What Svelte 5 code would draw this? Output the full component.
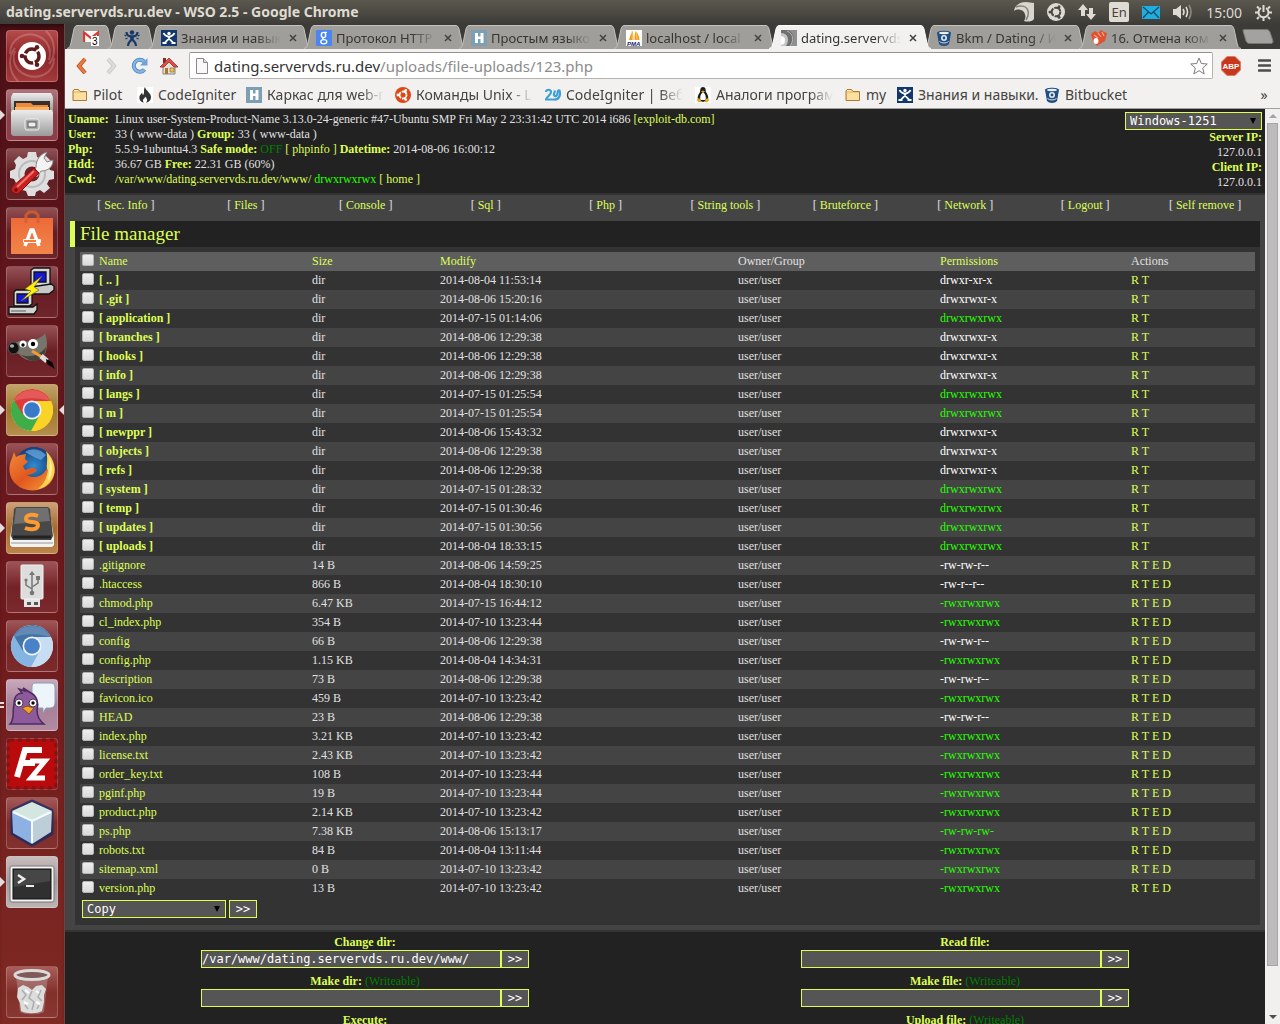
<script>
  const tabs = [
    { icon: 'gmail', pinned: true },
    { icon: 'runner', pinned: true },
    { icon: 'people', title: 'Знания и навык' },
    { icon: 'google', title: 'Протокол HTTP' },
    { icon: 'habr', title: 'Простым языко' },
    { icon: 'pma', title: 'localhost / local' },
    { icon: 'arc', title: 'dating.servervds' },
    { icon: 'bucket', title: 'Bkm / Dating / И' },
    { icon: 'red', title: '16. Отмена ком' }
  ].map((tab) => ({ ...tab, active: tab.icon === 'arc' }));

  const bookmarks = [
    { icon: 'folder', title: 'Pilot' },
    { icon: 'flame', title: 'CodeIgniter' },
    { icon: 'habr', title: 'Каркас для web-пр', fade: true },
    { icon: 'ubuntu', title: 'Команды Unix - Lin', fade: true },
    { icon: 'wave', title: 'CodeIgniter | Веб р', fade: true },
    { icon: 'tux', title: 'Аналоги программ', fade: true },
    { icon: 'folder', title: 'my' },
    { icon: 'people', title: 'Знания и навыки.' },
    { icon: 'bucket', title: 'Bitbucket' }
  ];

  const launcher = [
    { icon: 'dash', tone: 'red' },
    { icon: 'files', tone: 'rose', left: true },
    { icon: 'settings', tone: 'dark' },
    { icon: 'software', tone: 'dark' },
    { icon: 'putty', tone: 'dark' },
    { icon: 'gimp', tone: 'dark' },
    { icon: 'chrome', tone: 'gold', left: true, right: true },
    { icon: 'firefox', tone: 'dark' },
    { icon: 'sublime', tone: 'amber', left: true },
    { icon: 'usb', tone: 'dark' },
    { icon: 'chromium', tone: 'dark' },
    { icon: 'pidgin', tone: 'lilac', double: true },
    { icon: 'filezilla', tone: 'crimson' },
    { icon: 'netbeans', tone: 'dark' },
    { icon: 'terminal', tone: 'grey', left: true },
    { icon: 'trash', tone: 'dark', last: true }
  ];

  const menu = ['Sec. Info', 'Files', 'Console', 'Sql', 'Php', 'String tools', 'Bruteforce', 'Network', 'Logout', 'Self remove'];

  const rows = [
    ['[ .. ]', 'dir', '2014-08-04 11:53:14', 'drwxr-xr-x'],
    ['[ .git ]', 'dir', '2014-08-06 15:20:16', 'drwxrwxr-x'],
    ['[ application ]', 'dir', '2014-07-15 01:14:06', 'drwxrwxrwx'],
    ['[ branches ]', 'dir', '2014-08-06 12:29:38', 'drwxrwxr-x'],
    ['[ hooks ]', 'dir', '2014-08-06 12:29:38', 'drwxrwxr-x'],
    ['[ info ]', 'dir', '2014-08-06 12:29:38', 'drwxrwxr-x'],
    ['[ langs ]', 'dir', '2014-07-15 01:25:54', 'drwxrwxrwx'],
    ['[ m ]', 'dir', '2014-07-15 01:25:54', 'drwxrwxrwx'],
    ['[ newppr ]', 'dir', '2014-08-06 15:43:32', 'drwxrwxr-x'],
    ['[ objects ]', 'dir', '2014-08-06 12:29:38', 'drwxrwxr-x'],
    ['[ refs ]', 'dir', '2014-08-06 12:29:38', 'drwxrwxr-x'],
    ['[ system ]', 'dir', '2014-07-15 01:28:32', 'drwxrwxrwx'],
    ['[ temp ]', 'dir', '2014-07-15 01:30:46', 'drwxrwxrwx'],
    ['[ updates ]', 'dir', '2014-07-15 01:30:56', 'drwxrwxrwx'],
    ['[ uploads ]', 'dir', '2014-08-04 18:33:15', 'drwxrwxrwx'],
    ['.gitignore', '14 B', '2014-08-06 14:59:25', '-rw-rw-r--'],
    ['.htaccess', '866 B', '2014-08-04 18:30:10', '-rw-r--r--'],
    ['chmod.php', '6.47 KB', '2014-07-15 16:44:12', '-rwxrwxrwx'],
    ['cl_index.php', '354 B', '2014-07-10 13:23:44', '-rwxrwxrwx'],
    ['config', '66 B', '2014-08-06 12:29:38', '-rw-rw-r--'],
    ['config.php', '1.15 KB', '2014-08-04 14:34:31', '-rwxrwxrwx'],
    ['description', '73 B', '2014-08-06 12:29:38', '-rw-rw-r--'],
    ['favicon.ico', '459 B', '2014-07-10 13:23:42', '-rwxrwxrwx'],
    ['HEAD', '23 B', '2014-08-06 12:29:38', '-rw-rw-r--'],
    ['index.php', '3.21 KB', '2014-07-10 13:23:42', '-rwxrwxrwx'],
    ['license.txt', '2.43 KB', '2014-07-10 13:23:42', '-rwxrwxrwx'],
    ['order_key.txt', '108 B', '2014-07-10 13:23:44', '-rwxrwxrwx'],
    ['pginf.php', '19 B', '2014-07-10 13:23:44', '-rwxrwxrwx'],
    ['product.php', '2.14 KB', '2014-07-10 13:23:42', '-rwxrwxrwx'],
    ['ps.php', '7.38 KB', '2014-08-06 15:13:17', '-rw-rw-rw-'],
    ['robots.txt', '84 B', '2014-08-04 13:11:44', '-rwxrwxrwx'],
    ['sitemap.xml', '0 B', '2014-07-10 13:23:42', '-rwxrwxrwx'],
    ['version.php', '13 B', '2014-07-10 13:23:42', '-rwxrwxrwx']
  ].map(([name, size, modified, perms]) => ({
    name, size, modified, perms,
    dir: size === 'dir',
    writable: perms[8] === 'w',
    actions: size === 'dir' ? ['R', 'T'] : ['R', 'T', 'E', 'D']
  }));

  const tools = [
    { id: 'cd', label: 'Change dir:', value: '/var/www/dating.servervds.ru.dev/www/' },
    { id: 'read', label: 'Read file:', value: '' },
    { id: 'mkdir', label: 'Make dir:', note: '(Writeable)', value: '' },
    { id: 'mkfile', label: 'Make file:', note: '(Writeable)', value: '' },
    { id: 'exec', label: 'Execute:', value: '' },
    { id: 'upload', label: 'Upload file:', note: '(Writeable)', value: '' }
  ];
</script>

{#snippet smallIcon(name)}
  <svg class="small-icon" viewBox="0 0 16 16" aria-hidden="true">
    {#if name === 'gmail'}
      <rect x="0" y="1" width="16" height="11" rx="1" fill="#f6f6f6" />
      <path d="M1 12V2.500L8 8L15 2.500V12" fill="none" stroke="#d93a31" stroke-width="2.200" />
      <rect x="8" y="6" width="8" height="10" fill="#fff" />
      <text x="9" y="15" font-size="10" font-family="Liberation Sans, sans-serif" fill="#000">3</text>
    {:else if name === 'runner'}
      <circle cx="8" cy="2.500" r="2.200" fill="#15396d" />
      <path d="M2.500 2C2.500 6 5 6 8 6.500C11 6 13.500 6 13.500 2M6.500 7L9 10C10 12 12 12 12 16M9.500 7L7 10C6 12 4 12 4 16" fill="none" stroke="#15396d" stroke-width="2.200" />
      <path d="M.5 5l1.500 1M15.500 5l-1.500 1M1.500 9l2-1M14.500 9l-2-1" stroke="#15396d" stroke-width="1.200" />
    {:else if name === 'people'}
      <rect width="16" height="16" fill="#11376d" />
      <circle cx="8" cy="3.500" r="1.700" fill="#fff" />
      <path d="M2.500 3C4 6.500 6 6 8 6.500C10 6 12 6.500 13.500 3M7 6.500L9 9.500C10 11 12 11 12 14M9 6.500L7 9.500C6 11 4 11 4 14M1.500 13h4M10.500 13h4" fill="none" stroke="#fff" stroke-width="1.800" />
    {:else if name === 'google'}
      <rect width="16" height="16" rx="1" fill="#4a86ee" />
      <ellipse cx="7.500" cy="5" rx="2.200" ry="2.600" fill="none" stroke="#fff" stroke-width="1.400" />
      <path d="M8.500 2.300H11M8 7.600C6 8.300 6.500 9.300 8 9.800" fill="none" stroke="#fff" stroke-width="1.200" />
      <ellipse cx="7.800" cy="11.700" rx="3" ry="2.100" fill="none" stroke="#fff" stroke-width="1.300" />
    {:else if name === 'habr'}
      <rect width="16" height="16" fill="#7d9fb3" />
      <path d="M4 3h3v3.500h2.500V3h3v10h-3V9H7v4H4z" fill="#fff" />
    {:else if name === 'pma'}
      <rect width="16" height="16" fill="#fff" />
      <path d="M3 10C4 6 5 3 7 1L7.500 10ZM8.500 10C8.500 6 9 3 9.500 1C12 3 13.500 7 13.500 10Z" fill="#f49b1c" />
      <path d="M6 1l.5 9M10.500 2l.5 8" stroke="#ffc66b" />
      <text x="1" y="16" font-size="6" font-weight="700" font-style="italic" font-family="Liberation Sans, sans-serif" fill="#20206a">PMA</text>
    {:else if name === 'arc'}
      <rect width="16" height="16" fill="#8f8f8f" />
      <path d="M0 0H7C14 3 14 12 9 16H0Z" fill="#6f6f6f" />
      <path d="M0 3C7 3 9 10 5 16H0Z" fill="#c4c4c4" />
      <path d="M0 6C4 6 5 10 3 14L0 15Z" fill="#fff" />
      <path d="M6 1C13 4 13 11 9 16" fill="none" stroke="#b5b5b5" />
    {:else if name === 'bucket'}
      <path d="M1 3C1 0 15 0 15 3L13 14C11 16.500 5 16.500 3 14Z" fill="#205081" />
      <ellipse cx="8" cy="3" rx="5" ry="1.200" fill="#e6edf4" />
      <circle cx="8" cy="8" r="2.200" fill="none" stroke="#e6edf4" stroke-width="1.600" />
      <path d="M3.500 11.500C6 13.500 10 13.500 12.500 11.500" fill="none" stroke="#dbe5ef" />
    {:else if name === 'red'}
      <path d="M0 4L4 1L7 3L10 0L13 2L16 3L14 11L9 14L6 16L2 12Z" fill="#e2512f" />
      <path d="M3 5l4 3M7 3l3 4M11 2l2 4" stroke="#f4a58d" stroke-width="1.200" />
      <ellipse cx="5" cy="11" rx="2.500" ry="3" fill="#fff" />
    {:else if name === 'folder'}
      <path d="M1 13.500V4L2 2.500H6.500L8 4.500H14.500V13.500Z" fill="#f2c879" stroke="#a87c36" />
      <path d="M2 6H14V13H2Z" fill="#fbe0a2" />
      <path d="M2 3.500H6" stroke="#fff0c8" />
    {:else if name === 'flame'}
      <rect width="16" height="16" fill="#fff" />
      <path d="M8 0C9 4 14 6 14 10C14 14 11 15.500 9 15.500C11 14 10 11 8 9.500C8 12 6 11.500 6 13.500C6 14.500 6.500 15 7 15.500C3 15 2 12 2.500 9.500C3 7.500 4.500 7 5 5.500C5.500 7 5.500 8 6 8C8 6 6 3 8 0Z" fill="#333" />
    {:else if name === 'ubuntu'}
      <circle cx="8" cy="8" r="8" fill="#dd4814" />
      <circle cx="8" cy="8" r="3.500" fill="none" stroke="#fff" stroke-width="1.800" stroke-dasharray="6.400 1" />
      <circle cx="2.900" cy="8" r="1.400" fill="#fff" /><circle cx="10.700" cy="3.400" r="1.400" fill="#fff" /><circle cx="10.700" cy="12.600" r="1.400" fill="#fff" />
    {:else if name === 'wave'}
      <path d="M1 5C1 2 6 2 6 5C6 8 2 9 1 12.500H9C14 13 16 8 14.500 3.500C12 3 13 6 12 8C11 10 8.500 9 9 7L10 3.500" fill="none" stroke="#3ba0d8" stroke-width="2.200" />
    {:else if name === 'tux'}
      <rect width="16" height="16" fill="#fff" />
      <path d="M8 0C11 0 10.500 3 11 5C12 7 14 9 13 13L8 15L3 13C2 9 4 7 5 5C5.500 3 5 0 8 0Z" fill="#1d1d1d" />
      <path d="M8 5.500C10 6 11.500 10 10.500 13H5.500C4.500 10 6 6 8 5.500Z" fill="#fff" />
      <path d="M6 4.500L8 3.500L10 4.500L8 6Z M1.500 13L4 11L6.500 14.500L4 15.500ZM14.500 13L12 11L9.500 14.500L12 15.500Z" fill="#eda91b" />
    {/if}
  </svg>
{/snippet}

{#snippet chromeBall(red, green, yellow, blue)}
  <circle cx="26" cy="26" r="21" fill={yellow} />
  <path d="M26 26L7.800 15.500A21 21 0 0 0 26 47L35 31Z" fill={green} />
  <path d="M26 17H45A21 21 0 0 0 7.800 15.500L17 31Z" fill={red} />
  <path d="M26 26L18.200 30.500L26 47L34 30.500Z" fill={green} />
  <path d="M34 30.500L25 47A21 21 0 0 0 45 17H26Z" fill={yellow} />
  <circle cx="26" cy="26" r="9.500" fill="#f1f5fa" />
  <circle cx="26" cy="26" r="7.800" fill={blue} />
  <path d="M7 18A21 21 0 0 1 45 18C36 13 16 13 7 18Z" fill="#fff" opacity=".16" />
{/snippet}

{#snippet appIcon(name)}
  <svg viewBox="0 0 52 52" aria-hidden="true">
    {#if name === 'dash'}
      <path d="M4 24C4 8 20 1 32 6C42 10 46 20 43 30M48 28C48 44 32 50 20 45C10 41 5 31 9 21M12 51C2 42 2 26 9 18M40 1C50 10 50 26 43 34" fill="none" stroke="#fff" opacity=".2" stroke-width="2" />
      <circle cx="26" cy="26" r="14" fill="#fff" />
      <circle cx="26" cy="26" r="7" fill="none" stroke="#601b1b" stroke-width="3.500" stroke-dasharray="13 1.700" stroke-dashoffset="5" />
      <circle cx="16" cy="26" r="2.300" fill="#601b1b" /><circle cx="31" cy="17.300" r="2.300" fill="#601b1b" /><circle cx="31" cy="34.700" r="2.300" fill="#601b1b" />
    {:else if name === 'files'}
      <path d="M7 4H45L47 8V22H5V8Z" fill="url(#steel)" />
      <path d="M8 12H44V22H8Z" fill="#35302c" />
      <path d="M10 14H25L27 16H42V22H10Z" fill="#e98a3c" /><path d="M9 18H43V22H9Z" fill="#f8b26a" />
      <path d="M6 21H46L47 23V45L45 47H7L5 45V23Z" fill="url(#steel)" />
      <rect x="19" y="30" width="14" height="11" rx="2" fill="#aaa" stroke="#eee" /><rect x="22" y="33" width="8" height="5" fill="#eee" stroke="#555" />
    {:else if name === 'settings'}
      <path d="M22 4H30L31 9L36 11L40 8L45 13L42 18L44 22L48 23V31L43 32L41 36L44 40L38 45L34 42L30 44L29 48H22L20 43L16 42L12 45L7 39L10 35L8 31L4 30V23L9 21L10 17L8 13L13 8L17 11L21 9Z" fill="#dedede" />
      <circle cx="26" cy="26" r="13" fill="none" stroke="#bbb" stroke-width="2" /><circle cx="26" cy="26" r="7.500" fill="#6b2229" />
      <path d="M28 27L30 19C30 12 34 6 41 4L38 10L41 14L47 12C47 19 42 23 35 23L31 29Z" fill="#f3f3f3" stroke="#888" />
      <path d="M28 20L33 25L14 44C11 48 3 44 6 39Z" fill="#c92020" stroke="#8b0d10" /><path d="M28 23L11 39" stroke="#ee7771" stroke-width="2" /><circle cx="10" cy="42" r="1.700" fill="#6a0a0a" />
    {:else if name === 'software'}
      <path d="M20 14V8L23 5H29L32 8V14" fill="none" stroke="#c85a31" stroke-width="3" />
      <path d="M5 11H47V47H5Z" fill="url(#orange)" />
      <path d="M20 16V11M32 16V11" stroke="#d8622f" stroke-width="3" />
      <path d="M19 39L25 23H27L33 39" fill="none" stroke="#fff" stroke-width="3.500" /><rect x="17" y="32" width="18" height="4" rx="1" fill="#fff" /><path d="M18 34H30" stroke="#f47b3c" stroke-width="2" />
    {:else if name === 'putty'}
      <g stroke="#111" stroke-width="1.300">
        <path d="M25 4L28 2H44V19L41 21H25Z" fill="#d7d7d7" /><path d="M28 6H40V16H28Z" fill="#1416dd" />
        <path d="M25 21L45 18L48 20V24L43 28H26Z" fill="#c8c8c8" />
        <path d="M8 26L10 24H26V38L23 40H8Z" fill="#d7d7d7" /><path d="M11 28H22V37H11Z" fill="#1416dd" />
        <path d="M3 41H27L31 38V44L28 48H3Z" fill="#d2d2d2" /><path d="M5 45H20" stroke="#777" />
        <path d="M36 10L19 23L25 25L15 35L33 24L28 21Z" fill="#ffee12" stroke="#756b00" stroke-width=".7" />
      </g>
    {:else if name === 'gimp'}
      <path d="M9 18C13 14 19 18 25 16C31 14 37 12 39 8C42 16 42 27 36 33C29 38 18 36 13 29L6 27Z" fill="#77746b" />
      <path d="M13 29C20 33 33 32 40 22C39 34 31 38 23 35Z" fill="#444139" />
      <circle cx="17" cy="19" r="3.500" fill="#fff" /><circle cx="27" cy="19" r="5" fill="#fff" /><circle cx="17" cy="20" r="1.700" /><circle cx="27" cy="19" r="2.200" />
      <ellipse cx="7.500" cy="23" rx="5.500" ry="6" fill="#111" stroke="#555" /><ellipse cx="6" cy="21" rx="2.200" ry="1.700" fill="#aaa" />
      <path d="M26 26L36 32" stroke="#ef9d35" stroke-width="3" /><path d="M35 31L41 36" stroke="#ddd" stroke-width="5" /><path d="M40 34L46 37L49 44L41 39Z" fill="#080808" />
    {:else if name === 'chrome'}
      {@render chromeBall('#df3a3b', '#3fae49', '#fad327', '#3a79c8')}
    {:else if name === 'chromium'}
      {@render chromeBall('#4474a6', '#83b4e2', '#c6ddf3', '#4a82c8')}
    {:else if name === 'firefox'}
      <circle cx="28" cy="23" r="19" fill="url(#globe)" />
      <path d="M19 9C26 4 35 6 40 12L35 17L28 14Z" fill="#7ab9e9" opacity=".6" />
      <path d="M8 9L10 14L14 12L20 11L19 16L22 19L17 23L19 27L25 25C28 24 30 26 31 28C28 29 26 32 21 32C27 36 36 34 40 27C44 22 43 15 41 11C50 20 51 32 44 40C36 49 20 50 11 42C2 35 2 23 6 15Z" fill="url(#fox)" />
      <path d="M40 8C49 17 51 28 46 36C43 41 38 45 32 46C40 39 41 33 42 27C39 25 43 17 40 8Z" fill="#fbd451" />
      <path d="M43 14C47 22 47 31 42 38C43 31 45 22 43 14Z" fill="#fff3b0" />
    {:else if name === 'sublime'}
      <path d="M8 10H44L48 36V43L46 45H6L4 43V36Z" fill="#f3f3f3" /><path d="M5 40H47V42H5Z" fill="#c5c5c5" />
      <path d="M10 5H42L44 7L47 34L45 38H7L5 34L8 7Z" fill="#484848" /><path d="M10 6H42L44 19L8 22Z" fill="#707070" />
      <path d="M7 35H45" stroke="#222" stroke-width="3" />
      <path d="M32 14C27 12 20 12 20 17C20 22 32 18 32 23C32 28 24 28 19 26" fill="none" stroke="#ff9a2e" stroke-width="4" />
    {:else if name === 'usb'}
      <path d="M18 37H34V46H18Z" fill="#e4e4e4" /><path d="M21 41h4v3h-4zM28 41h4v3h-4z" fill="#555" />
      <rect x="15" y="4" width="22" height="34" rx="1" fill="#ddd" stroke="#f3f3f3" />
      <path d="M26 32V12M26 28L20 24V20M26 26L32 22V18" fill="none" stroke="#777" stroke-width="1.500" /><path d="M23 14L26 10L29 14Z" fill="#777" /><circle cx="26" cy="32" r="2.300" fill="#777" /><circle cx="20" cy="19" r="1.600" fill="#777" /><path d="M30 15h4v4h-4z" fill="#777" />
    {:else if name === 'pidgin'}
      <path d="M29 4H45C48 4 49 6 49 9V24C49 27 47 29 44 29H40L37 34V29H29C26 29 26 27 26 24V8C26 5 27 4 29 4Z" fill="#edf5fb" stroke="#8a9eb8" />
      <path d="M4 45C9 40 6 34 8 25C8 17 12 14 16 14L13 10L19 12L17 9L25 14C31 17 33 24 31 31C31 38 34 42 38 45Z" fill="#8d5a9c" stroke="#4d2b60" stroke-width="1.500" />
      <circle cx="13" cy="24" r="4" fill="#fff" stroke="#51305e" /><circle cx="27" cy="24" r="4" fill="#fff" stroke="#51305e" /><circle cx="13" cy="24" r="1.700" /><circle cx="27" cy="24" r="1.700" />
      <path d="M16 29L21 27L28 29L23 35Z" fill="#f0a22a" stroke="#884b13" />
    {:else if name === 'filezilla'}
      <rect x="2" y="2" width="48" height="48" rx="2" fill="#b90b0b" stroke="#7a1518" stroke-width="3" stroke-dasharray="4 4" />
      <path d="M11 39L19 12H36M16 25H29" fill="none" stroke="#fff" stroke-width="6" /><path d="M24 23H39L25 40H39" fill="none" stroke="#fff" stroke-width="5" />
    {:else if name === 'netbeans'}
      <path d="M26 5L45 14V36L26 47L7 36V14Z" fill="#263265" stroke="#1d2a62" stroke-width="5" stroke-linejoin="round" opacity=".8" />
      <path d="M26 5L46 14L26 24L6 14Z" fill="#d3e6e0" /><path d="M6 14L26 24V47L7 36Z" fill="#8eb1e4" /><path d="M46 14L26 24V47L45 35Z" fill="#bdced9" /><path d="M26 24V46M7 15L26 24L45 15" fill="none" stroke="#f5fbff" stroke-width="2" />
    {:else if name === 'terminal'}
      <rect x="4" y="10" width="44" height="36" rx="2" fill="#f3f3f3" stroke="#777" /><rect x="7" y="13" width="38" height="30" fill="#303030" stroke="#111" /><path d="M8 14H44V25L8 31Z" fill="#464646" />
      <path d="M12 19L18 23L12 27" fill="none" stroke="#eee" stroke-width="2.500" /><path d="M20 30H28" stroke="#eee" stroke-width="2" />
    {:else if name === 'trash'}
      <path d="M10 10H42L38 46C34 49 18 49 14 46Z" fill="#c9b9b9" opacity=".35" />
      <path d="M12 22L17 19L22 21L26 24L30 20L36 19L40 23L38 29L38 36L36 45C31 48 20 48 15 45L14 37L11 31Z" fill="#dcdcdc" />
      <path d="M16 24L20 29L16 34M26 25L23 32L28 36L26 44M35 24L32 31L36 35M19 39L22 43M33 39L31 43" fill="none" stroke="#adadad" stroke-width="1.500" /><path d="M19 24L23 27M18 36L22 38M30 25L33 27M30 36L34 38" stroke="#fff" stroke-width="2" />
      <ellipse cx="26" cy="9" rx="17" ry="4.500" fill="#7f5a58" stroke="#dadada" stroke-width="3" />
    {/if}
  </svg>
{/snippet}

<svg class="defs" width="0" height="0" aria-hidden="true">
  <defs>
    <linearGradient id="steel" x2="0" y2="1"><stop offset="0" stop-color="#ececec" /><stop offset="1" stop-color="#9b9b9b" /></linearGradient>
    <linearGradient id="orange" x2="0" y2="1"><stop offset="0" stop-color="#ed6a38" /><stop offset="1" stop-color="#f18549" /></linearGradient>
    <linearGradient id="fox" x2="1" y2="1"><stop offset="0" stop-color="#f08a3a" /><stop offset=".5" stop-color="#e2571e" /><stop offset="1" stop-color="#f3a03a" /></linearGradient>
    <radialGradient id="globe"><stop offset="0" stop-color="#2f8ed0" /><stop offset="1" stop-color="#173d7c" /></radialGradient>
  </defs>
</svg>

<div class="desktop">
  <header class="panel">
    <span class="window-title">dating.servervds.ru.dev - WSO 2.5 - Google Chrome</span>
    <div class="indicators">
      <svg width="20" height="20" viewBox="0 0 20 20"><path d="M0 9C1 3 6 0 12 0L20 1V17C18 20 13 20 10 19C12 16 12 12 9 9C6 7 2 7 0 9Z" fill="#d9d6cf" /><path d="M2 5C7 3 13 4 14 9C15 12 14 15 12 18" fill="none" stroke="#85827a" stroke-width="1.500" /></svg>
      <svg width="18" height="18" viewBox="0 0 18 18"><circle cx="9" cy="9" r="9" fill="#dfdbd2" /><circle cx="9" cy="9" r="4.300" fill="none" stroke="#4a4842" stroke-width="2" stroke-dasharray="8 1" /><circle cx="3" cy="9" r="1.500" fill="#4a4842" /><circle cx="12" cy="3.800" r="1.500" fill="#4a4842" /><circle cx="12" cy="14.200" r="1.500" fill="#4a4842" /></svg>
      <svg width="18" height="16" viewBox="0 0 18 16"><path d="M5 0L10 6H7V12H3V6H0ZM13 16L18 10H15V4H11V10H8Z" fill="#dfdbd2" /></svg>
      <span class="lang">En</span>
      <svg width="18" height="13" viewBox="0 0 18 13"><rect width="18" height="13" fill="#1eaee2" /><path d="M1 1L9 8L17 1M1 12L6.500 6M17 12L11.500 6" fill="none" stroke="#194a63" stroke-width="1.300" /></svg>
      <svg width="20" height="16" viewBox="0 0 20 16"><path d="M0 5H3L8 1V15L3 11H0Z" fill="#dfdbd2" /><path d="M10 5Q12 8 10 11M13 3Q16 8 13 13" fill="none" stroke="#dfdbd2" stroke-width="1.600" /><path d="M16 1Q20 8 16 15" fill="none" stroke="#8c8981" stroke-width="1.600" /></svg>
      <span class="clock">15:00</span>
      <svg width="17" height="17" viewBox="0 0 17 17"><path d="M6 4A5 5 0 1 0 11 4" fill="none" stroke="#dfdbd2" stroke-width="2" /><path d="M8.500 1V8M2 2.500L4 4.500M15 2.500L13 4.500M0 8.500H3M14 8.500H17M2 15L4 13M15 15L13 13M8.500 14V17" stroke="#dfdbd2" stroke-width="2" /></svg>
    </div>
  </header>

  <div class="workspace">
    <nav class="launcher" aria-label="Launcher">
      {#each launcher as app}
        <button class="app {app.tone}" class:last={app.last} aria-label={app.icon}>
          {@render appIcon(app.icon)}
          {#if app.left}<span class="pip left"></span>{/if}
          {#if app.right}<span class="pip right"></span>{/if}
          {#if app.double}<span class="pip double"></span>{/if}
        </button>
      {/each}
    </nav>

    <main class="window">
      <div class="tabs">
        {#each tabs as tab}
          <div class="tab" class:active={tab.active} class:pinned={tab.pinned}>
            <svg class="edge" viewBox="0 0 10 24"><path class="fill" d="M0 24C3 23 3 21 4 18L7 4C8 1 9 .5 10 .5V24Z" /><path class="line" d="M0 23.500C3 23 3 21 4 18L7 4C8 1 9 .5 10 .5" /></svg>
            <div class="tab-body">
              {@render smallIcon(tab.icon)}
              {#if !tab.pinned}
                <span class="tab-title">{tab.title}</span>
                <button class="close" aria-label="Close tab"><svg viewBox="0 0 8 8"><path d="M1 1L7 7M7 1L1 7" stroke="#44423f" stroke-width="1.500" /></svg></button>
              {/if}
            </div>
            <svg class="edge" viewBox="0 0 10 24"><path class="fill" d="M10 24C7 23 7 21 6 18L3 4C2 1 1 .5 0 .5V24Z" /><path class="line" d="M10 23.500C7 23 7 21 6 18L3 4C2 1 1 .5 0 .5" /></svg>
          </div>
        {/each}
        <button class="new-tab" aria-label="New tab"><svg width="32" height="15" viewBox="0 0 32 15"><path d="M2 .5H24C26 .5 27 1 28 3L31 12C31 14 30 14.500 29 14.500H8C6 14.500 5 14 4 12L1 2Q1 .5 2 .5Z" fill="#a3a2a0" stroke="#777672" /></svg></button>
      </div>

      <div class="toolbar">
        <button class="tool" aria-label="Back"><svg width="18" height="18" viewBox="0 0 18 18"><path d="M12 2L6 9L12 16" fill="none" stroke="#b34a18" stroke-width="4" /><path d="M12 2L6 9L12 16" fill="none" stroke="#ef7b3d" stroke-width="2.500" /></svg></button>
        <button class="tool" aria-label="Forward"><svg width="18" height="18" viewBox="0 0 18 18"><path d="M6 2L12 9L6 16" fill="none" stroke="#c7c4c0" stroke-width="4" /><path d="M6 2L12 9L6 16" fill="none" stroke="#dedbd8" stroke-width="2.500" /></svg></button>
        <button class="tool" aria-label="Reload"><svg width="18" height="18" viewBox="0 0 18 18"><path d="M13.500 12.500A6 6 0 1 1 13 4.500" fill="none" stroke="#4c82bb" stroke-width="4" /><path d="M13.500 12.500A6 6 0 1 1 13 4.500" fill="none" stroke="#83b5e2" stroke-width="2.500" /><path d="M16.500 1V8.500H9Z" fill="#6ba3d7" /></svg></button>
        <button class="tool" aria-label="Home"><svg width="18" height="18" viewBox="0 0 18 18"><path d="M3 9L9 3L15 9V17H3Z" fill="#e7e2d8" stroke="#87827a" /><path d="M3 1H6V6H3Z" fill="#8e2424" /><path d="M0 10L9 1L18 10H14L9 5L4 10Z" fill="#d9534c" stroke="#a02829" stroke-width=".8" /><path d="M5 11H8V17H5Z" fill="#ae7431" /><path d="M10 11H14V15H10Z" fill="#e9c44f" stroke="#8c7042" stroke-width=".7" /></svg></button>
        <div class="omnibox">
          <svg width="12" height="16" viewBox="0 0 12 16"><path d="M.5 .5H7.500L11.500 4.500V15.500H.5Z" fill="#f9f9f9" stroke="#8a8987" /><path d="M7.500 .5V4.500H11.500" fill="#ddd" stroke="#8a8987" /></svg>
          <span class="url"><span class="host">dating.servervds.ru.dev</span>/uploads/file-uploads/123.php</span>
          <button class="star" aria-label="Bookmark this page"><svg width="18" height="18" viewBox="0 0 18 18"><path d="M9 1L11.300 6.500L17.300 7L12.700 11L14.200 17L9 13.700L3.800 17L5.300 11L.7 7L6.700 6.500Z" fill="#fff" stroke="#7d7d7d" /></svg></button>
        </div>
        <button class="abp" aria-label="Adblock Plus"><svg width="20" height="20" viewBox="0 0 20 20"><path d="M6 .5H14L19.500 6V14L14 19.500H6L.5 14V6Z" fill="#c8371d" stroke="#dc7c69" /><text x="10" y="13" text-anchor="middle" font-size="8" font-weight="700" font-family="Liberation Sans, sans-serif" fill="#fff">ABP</text></svg></button>
        <button class="burger" aria-label="Menu"><svg width="13" height="13" viewBox="0 0 13 13"><path d="M1 1.500H12M1 6.500H12M1 11.500H12" stroke="#4d4c4a" stroke-width="2.600" stroke-linecap="round" /></svg></button>
      </div>

      <div class="bookmarks">
        {#each bookmarks as mark}
          <a href="#bookmark">{@render smallIcon(mark.icon)}<span class:fade={mark.fade}>{mark.title}</span></a>
        {/each}
        <button class="more" aria-label="More bookmarks">»</button>
      </div>

      <div class="viewport">
        <div class="page">
          <section class="info">
            <dl>
              <dt>Uname:</dt>
              <dd>Linux user-System-Product-Name 3.13.0-24-generic #47-Ubuntu SMP Fri May 2 23:31:42 UTC 2014 i686 <a href="#exploit">[exploit-db.com]</a></dd>
              <dt>User:</dt>
              <dd>33 ( www-data ) <b>Group:</b> 33 ( www-data )</dd>
              <dt>Php:</dt>
              <dd>5.5.9-1ubuntu4.3 <b>Safe mode:</b> <span class="dim">OFF</span> <a href="#phpinfo">[ phpinfo ]</a> <b>Datetime:</b> 2014-08-06 16:00:12</dd>
              <dt>Hdd:</dt>
              <dd>36.67 GB <b>Free:</b> 22.31 GB (60%)</dd>
              <dt>Cwd:</dt>
              <dd><a href="#root">/var/www/dating.servervds.ru.dev/www/</a> <span class="ok">drwxrwxrwx</span> <a href="#home">[ home ]</a></dd>
            </dl>
            <div class="side">
              <span class="select charset"><select aria-label="Charset"><option>Windows-1251</option><option>UTF-8</option></select></span>
              <b>Server IP:</b>
              <span>127.0.0.1</span>
              <b>Client IP:</b>
              <span>127.0.0.1</span>
            </div>
          </section>

          <nav class="menu" aria-label="Sections">
            {#each menu as item}
              <span>[ <a href="#section">{item}</a> ]</span>
            {/each}
          </nav>

          <section class="manager">
            <h1>File manager</h1>
            <div class="content">
              <table>
                <colgroup>
                  <col class="c-check" /><col class="c-name" /><col class="c-size" /><col class="c-modify" /><col class="c-owner" /><col class="c-perms" /><col class="c-actions" />
                </colgroup>
                <thead>
                  <tr>
                    <th><input type="checkbox" aria-label="Select all" /></th>
                    <th><a href="#sort">Name</a></th>
                    <th><a href="#sort">Size</a></th>
                    <th><a href="#sort">Modify</a></th>
                    <th>Owner/Group</th>
                    <th><a href="#sort">Permissions</a></th>
                    <th>Actions</th>
                  </tr>
                </thead>
                <tbody>
                  {#each rows as row}
                    <tr>
                      <td><input type="checkbox" aria-label={row.name} /></td>
                      <td><a href="#file" class:dir={row.dir}>{row.name}</a></td>
                      <td>{row.size}</td>
                      <td>{row.modified}</td>
                      <td>user/user</td>
                      <td><a href="#perms" class={row.writable ? 'ok' : 'plain'}>{row.perms}</a></td>
                      <td>{#each row.actions as action, i}{i ? ' ' : ''}<a href="#action">{action}</a>{/each}</td>
                    </tr>
                  {/each}
                </tbody>
              </table>
              <div class="bulk">
                <span class="select action"><select aria-label="Action"><option>Copy</option><option>Move</option><option>Delete</option></select></span>
                <button class="go">&gt;&gt;</button>
              </div>
            </div>
          </section>

          <section class="tools">
            {#each tools as tool}
              <form onsubmit={(e) => e.preventDefault()}>
                <div class="caption"><label for={tool.id}>{tool.label}</label>{#if tool.note}{' '}<span class="dim">{tool.note}</span>{/if}</div>
                <div class="field"><input id={tool.id} type="text" value={tool.value} /><button class="go">&gt;&gt;</button></div>
              </form>
            {/each}
          </section>
        </div>

        <div class="scrollbar" aria-hidden="true">
          <span class="arrow up"></span>
          <div class="track"><span class="thumb"></span></div>
          <span class="arrow down"></span>
        </div>
      </div>
    </main>
  </div>
</div>

<style>
  :global(body) { background: #222; }
  * { box-sizing: border-box; }
  button { border: 0; padding: 0; background: none; font: inherit; color: inherit; }
  svg { display: block; flex: none; }
  a { text-decoration: none; color: inherit; }
  .defs { position: absolute; }

  .desktop { display: flex; flex-direction: column; height: 100vh; overflow: hidden; font-family: "Noto Sans", "Open Sans", sans-serif; }

  .panel { flex: none; height: 24px; display: flex; align-items: center; justify-content: space-between; padding: 0 8px 0 6px; background: linear-gradient(#5b584e, #3d3c38); color: #dfdbd2; }
  .window-title { font-size: 14px; font-weight: 700; line-height: 20px; white-space: nowrap; }
  .indicators { display: flex; align-items: center; gap: 13px; }
  .lang { width: 20px; height: 20px; line-height: 20px; border-radius: 2px; background: #dfdbd2; color: #45433e; font-size: 13px; text-align: center; }
  .clock { font-size: 14px; }

  .workspace { flex: 1; min-height: 0; display: flex; }

  .launcher { flex: none; width: 65px; display: flex; flex-direction: column; gap: 7px; padding: 6px; background: linear-gradient(#4a1015, #5f151b 25%, #6c191d 55%, #7e2922); border-right: 1px solid #6d4444; box-shadow: inset 0 5px 5px -3px #2a090c; }
  .app { position: relative; flex: none; width: 52px; height: 52px; border-radius: 4px; border: 1px solid rgba(255, 255, 255, 0.2); background: linear-gradient(rgba(255, 200, 200, 0.34), rgba(255, 200, 200, 0.05) 50%, rgba(255, 200, 200, 0.09)); }
  .app svg { width: 52px; height: 52px; margin: -1px; }
  .last { margin-top: auto; }
  .red { background: linear-gradient(#b64a4a, #8c2327 50%, #a43a3a); }
  .rose { background: linear-gradient(#ad757b, #8a434b 50%, #8d3c47); }
  .gold { background: linear-gradient(#c3a36a, #a0792f 50%, #b68e4d); }
  .amber { background: linear-gradient(#cda077, #a66a2b 50%, #bd854a); }
  .lilac { background: linear-gradient(#c9a9bd, #a67f99 50%, #b18ba0); }
  .crimson { background: #8d191b; }
  .grey { background: linear-gradient(#c9bcbc, #a39a9a 50%, #bcb3b3); }
  .pip { position: absolute; top: 20px; border: 5px solid transparent; }
  .pip.left { left: -7px; border-left-color: #e4dcdc; border-right: 0; }
  .pip.right { right: -7px; border-right-color: #e4dcdc; border-left: 0; }
  .pip.double { left: -7px; top: 22px; width: 4px; height: 6px; border: solid #e4dcdc; border-width: 2px 0; }

  .window { flex: 1; min-width: 0; display: flex; flex-direction: column; background: #f2f1f0; }

  .tabs { flex: none; height: 25px; display: flex; align-items: flex-end; padding: 0 6px 0 2px; background: #3c3b37; }
  .tab { flex: 0 1 162px; min-width: 0; height: 24px; display: flex; margin-right: -7px; }
  .pinned { flex: 0 0 48px; }
  .edge { width: 10px; height: 24px; }
  .fill { fill: #9f9e9b; }
  .line { fill: none; stroke: #c4c3c0; }
  .tab-body { flex: 1; min-width: 0; display: flex; align-items: center; gap: 4px; padding: 0 0 0 2px; background: #9f9e9b; border-top: 1px solid #c4c3c0; color: #383530; }
  .pinned .tab-body { padding: 0 6px; }
  .active { position: relative; z-index: 1; }
  .active .fill { fill: #f2f1f0; }
  .active .tab-body { background: #f2f1f0; border-color: #fff; }
  .active .line { stroke: #fff; }
  .small-icon { width: 16px; height: 16px; }
  .tab-title { flex: 1; min-width: 0; overflow: hidden; white-space: nowrap; font-size: 13px; line-height: 20px; -webkit-mask-image: linear-gradient(90deg, #000 75%, transparent); mask-image: linear-gradient(90deg, #000 75%, transparent); }
  .close { width: 16px; height: 16px; display: grid; place-items: center; }
  .close svg { width: 8px; height: 8px; }
  .new-tab { align-self: center; margin-left: 8px; }

  .toolbar { flex: none; height: 33px; display: flex; align-items: center; padding: 0 9px 0 8px; }
  .tool { width: 29px; height: 26px; display: grid; place-items: center start; }
  .omnibox { flex: 1; min-width: 0; height: 27px; display: flex; align-items: center; gap: 6px; padding: 0 4px 0 6px; background: #fff; border: 1px solid #b5b3b0; border-top-color: #94928f; border-radius: 2px; }
  .url { flex: 1; min-width: 0; overflow: hidden; white-space: nowrap; font-size: 15px; line-height: 24px; color: #8c8c8c; }
  .host { color: #333; }
  .abp { margin-left: 8px; }
  .burger { margin-left: 17px; }

  .bookmarks { flex: none; height: 27px; display: grid; grid-template-columns: 65px 109px 149px 150px 150px 150px 52px 147px 1fr 12px; align-items: center; padding: 0 10px 0 7px; border-bottom: 1px solid #a2a09d; font-size: 14px; line-height: 20px; color: #45433f; }
  .bookmarks a { display: flex; align-items: center; gap: 5px; min-width: 0; white-space: nowrap; }
  .bookmarks .fade { width: 117px; overflow: hidden; -webkit-mask-image: linear-gradient(90deg, #000 80%, transparent); mask-image: linear-gradient(90deg, #000 80%, transparent); }

  .viewport { flex: 1; min-height: 0; display: flex; }
  .page { flex: 1; min-width: 0; overflow: hidden; background: #444; color: #e1e1e1; font: 12px/15px "Liberation Serif", serif; }
  .page a, .page b, dt, label { color: #df5; }
  .page .ok { color: #25ff00; }
  .page .plain { color: #fff; }
  .dim { color: #008000; }

  .info { display: flex; justify-content: space-between; padding: 3px; background: #222; border-bottom: 2px solid #333; }
  dl { margin: 0; display: grid; grid-template-columns: 47px 1fr; align-content: start; white-space: nowrap; }
  dt { font-weight: 700; }
  dd { margin: 0; }
  .side { display: flex; flex-direction: column; align-items: flex-end; text-align: right; }

  .select { position: relative; display: block; height: 18px; }
  .select::after { content: ""; position: absolute; right: 6px; top: 6px; border: 3px solid transparent; border-top: 6px solid #000; border-bottom: 0; pointer-events: none; }
  select, .field input, .go { display: block; margin: 0; height: 18px; border: 1px solid #df5; border-radius: 0; background: #555; color: #fff; font: 12px/16px "DejaVu Sans Mono", monospace; }
  select { appearance: none; width: 100%; padding: 0 4px; }
  .charset { width: 137px; }
  .action { width: 144px; }
  .go { width: 28px; text-align: center; }

  .menu { display: grid; grid-template-columns: repeat(10, 1fr); padding: 3px 0 8px 1px; text-align: center; }

  .manager { margin: 0 5px; }
  h1 { margin: 0; height: 26px; padding-left: 5px; border-left: 5px solid #df5; background: #222; color: #df5; font-size: 19px; font-weight: 400; line-height: 26px; }
  .content { margin-left: 5px; padding: 5px 5px 7px; background: #333; }
  table { width: 100%; table-layout: fixed; border-collapse: collapse; }
  .c-check { width: 17px; }
  .c-name { width: 213px; }
  .c-size { width: 128px; }
  .c-modify { width: 298px; }
  .c-owner { width: 202px; }
  .c-perms { width: 191px; }
  .c-actions { width: 126px; }
  th, td { height: 19px; padding: 0 2px; text-align: left; font-weight: 400; white-space: nowrap; }
  thead tr { background: #5e5e5e; }
  tbody tr:nth-child(even) { background: #444; }
  .dir { font-weight: 700; }
  td input, th input { appearance: none; display: block; width: 12px; height: 12px; margin: 0 0 3px; border: 1px solid #b4b4b4; border-radius: 2px; background: linear-gradient(#eee, #dadada); }
  .bulk { display: flex; gap: 3px; padding: 2px 2px 0; }

  .tools { display: grid; grid-template-columns: 1fr 1fr; margin-top: 5px; padding-top: 3px; border-top: 2px solid #333; background: #222; }
  form { display: flex; flex-direction: column; align-items: center; height: 39px; }
  label { font-weight: 700; }
  .field { display: flex; }
  .field input { width: 300px; padding: 0; }

  .scrollbar { flex: none; width: 15px; display: flex; flex-direction: column; align-items: center; background: #f1f0ef; }
  .track { flex: 1; width: 11px; display: flex; flex-direction: column; }
  .thumb { flex: 0 0 95%; background: #bcbcbc; border: 1px solid #a6a6a6; }
  .arrow { height: 14px; display: grid; place-items: center; }
  .arrow::before { content: ""; border: 4px solid transparent; }
  .up::before { border-top: 0; border-bottom-color: #a3a3a3; }
  .down::before { border-bottom: 0; border-top-color: #4f4f4f; }
</style>
